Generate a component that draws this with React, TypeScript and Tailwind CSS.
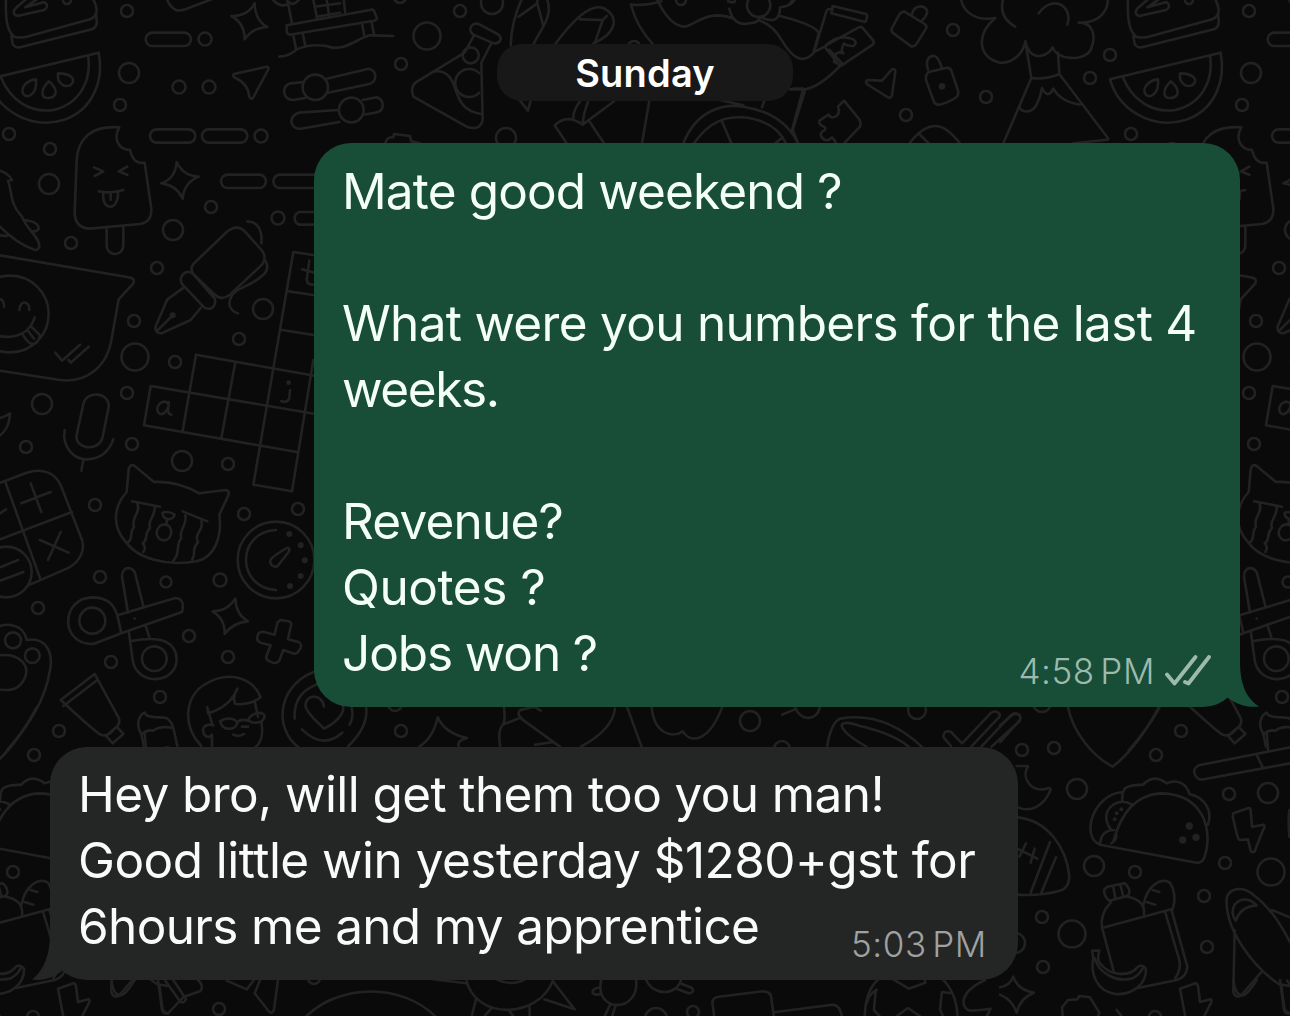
import React from 'react';
import clsx from 'clsx';

interface Line {
  text: string;
  tracking?: string;
}

interface Message {
  id: string;
  lines: Line[];
  time: string;
  outgoing: boolean;
}

const messages: Message[] = [
  {
    id: 'm1',
    outgoing: true,
    time: '4:58 PM',
    lines: [
      { text: 'Mate good weekend ?', tracking: 'tracking-[-0.86px]' },
      { text: '' },
      { text: 'What were you numbers for the last 4', tracking: 'tracking-[-0.7px]' },
      { text: 'weeks.', tracking: 'tracking-[-1.4px]' },
      { text: '' },
      { text: 'Revenue?', tracking: 'tracking-[-0.8px]' },
      { text: 'Quotes ?', tracking: 'tracking-[-0.43px]' },
      { text: 'Jobs won ?', tracking: 'tracking-[-1.1px]' },
    ],
  },
  {
    id: 'm2',
    outgoing: false,
    time: '5:03 PM',
    lines: [
      { text: 'Hey bro, will get them too you man!', tracking: 'tracking-[-0.6px]' },
      { text: 'Good little win yesterday $1280+gst for', tracking: 'tracking-[-0.53px]' },
      { text: '6hours me and my apprentice', tracking: 'tracking-[-0.66px]' },
    ],
  },
];

// The wallpaper repeats horizontally every TILE px
const TILE = 1122;

const bubbles: [number, number, number][] = [
  [127, 11, 6], [205, 39, 6.5], [129, 73, 10], [179, 87, 6.5], [209, 87, 6.5], [120, 105, 6], [9, 134, 6],
  [50, 149, 6], [49, 184, 10], [261, 136, 6.5], [211, 207, 6], [173, 230, 10], [71, 243, 6], [278, 218, 6.5],
  [67, 0, 4], [157, 268, 6], [263, 309, 10], [134, 321, 6], [239, 339, 6], [135, 357, 13.5], [175, 362, 6],
  [42, 404, 10], [127, 393, 6], [26, 447, 6], [132, 444, 6], [182, 461, 10], [228, 464, 6], [95, 505, 6],
  [244, 514, 6], [298, 509, 6], [100, 577, 6], [166, 582, 5.5], [220, 580, 6.5], [38, 608, 6], [189, 636, 6],
  [228, 657, 6], [111, 662, 6], [160, 697, 6], [59, 731, 6], [34, 755, 6], [13, 872, 6], [33, 1017, 6],
  [219, 1009, 6], [460, 11, 6], [427, 36, 13.5], [492, 3, 11], [401, 64, 6], [506, 138, 10], [400, -3, 6],
  [634, 47, 6], [681, 0, 5], [953, 30, 6], [986, 97, 6], [906, 115, 6], [1110, 55, 6], [1090, 78, 6],
  [1022, 750, 6], [1054, 748, 6], [1077, 789, 10], [1229, 794, 6], [1268, 793, 10], [1094, 866, 10],
  [1225, 863, 6], [1271, 872, 13.5], [1204, 896, 6], [1042, 917, 6], [1072, 934, 13.5], [1207, 947, 6],
  [1043, 967, 6], [1015, 943, 10], [1042, 703, 9], [401, 731, 6], [750, 721, 10], [917, 710, 9], [782, 749, 8],
  [395, 704, 7], [314, 978, 6], [656, 1019, 11], [693, 1012, 6],
];

// Doodles grouped by area; each group is drawn on a grid three times finer than the page
const doodles: { transform: string; paths: string[]; dots?: [number, number, number][] }[] = [
  {
    transform: 'translate(0 0) scale(.33333)',
    paths: [
      // toast
      'M18 0C16 50 20 90 38 105C42 115 60 114 80 110L270 58Q290 50 290 30Q288 10 276 -8M34 108L38 132Q44 144 60 142L276 88Q292 80 290 62L288 40M78 -2L50 22Q36 34 44 44Q50 50 62 46L132 30Q146 22 138 10Q132 4 120 10L76 22L110 -2',
      // watermelon
      'M-36 238L296 158C312 240 280 330 190 360C90 390 -10 330 -36 238ZM2 230C30 300 90 340 160 330C240 312 276 240 264 166',
      'M108 238C80 240 60 264 70 282C84 300 112 280 108 238ZM146 244C120 270 122 296 146 294C172 292 176 268 146 244ZM174 220C170 246 190 264 210 256C232 240 214 220 174 220Z',
      'M457 98H553A20 20 0 0 1 553 138H457A20 20 0 0 1 457 98ZM470 388H566A20 20 0 0 1 566 428H470A20 20 0 0 1 470 388ZM626 388H722A20 20 0 0 1 722 428H626A20 20 0 0 1 626 388Z',
      'M683 524H778A20 20 0 0 1 778 564H683A20 20 0 0 1 683 524ZM960 524H840A20 20 0 0 0 840 564H960M960 636H898A20 20 0 0 0 898 674H960',
      // sparkles and paper plane
      'M764 10Q765 62 802 81Q756 84 734 118Q734 70 694 48Q744 48 764 10Z',
      'M530 486Q550 528 596 530Q552 548 548 596Q530 556 484 550Q526 536 530 486Z',
      'M702 222L800 200Q808 200 804 210L760 292Q752 302 748 290Q744 250 706 234Q696 228 702 222Z',
      'M500 -5Q508 20 528 30Q540 34 556 28L640 -4',
      // ice lolly
      'M358 382C280 376 234 410 230 480L224 640Q226 684 270 686L420 672Q456 666 454 626L434 488Q400 494 390 450C356 450 338 416 358 382ZM320 684V738A24 24 0 0 0 370 736V678',
      'M282 502L310 514L284 528M382 500L356 514L382 524M296 574Q330 582 370 570M310 580C304 632 356 636 354 576M332 580V600',
      // house
      'M820 0Q846 28 870 8Q880 18 896 0M862 0L876 70M940 0L952 58M980 0L988 50M860 76L1110 30Q1122 26 1124 38L1130 52Q1132 60 1122 62L870 104Q862 104 860 94ZM880 106L888 146M908 100L916 138M838 170Q870 168 890 148Q930 130 980 138C1030 160 1080 110 1110 106L1180 108M1086 68L1092 104M1114 64L1122 102',
      'M944 20L1020 10M1030 -10L1036 40M950 50L1020 38',
      // sliders
      'M910 246L872 250Q852 256 852 276Q856 300 880 300L916 294M980 236L1106 206Q1126 210 1126 230Q1124 248 1108 252L984 278M1015 330L896 338Q874 346 874 366Q880 388 902 386L1018 366M1088 300L1130 292Q1150 298 1148 320Q1144 336 1126 338L1090 344',
      'M984 262A38 38 0 1 1 908 262A38 38 0 1 1 984 262ZM1091 330A37 37 0 1 1 1017 330A37 37 0 1 1 1091 330Z',
      // chili
      'M0 512Q26 520 36 540L24 542C38 580 28 610 66 650C80 690 120 710 118 740Q114 754 100 748Q50 730 0 680M70 660Q116 664 116 686Q110 698 92 692M0 706L20 708',
    ],
  },
  {
    transform: 'translate(0 240) scale(.33333)',
    paths: [
      // speech bubble sticker
      'M-130 40Q-60 40 0 46L386 112Q406 114 400 130L356 178L336 290C324 380 260 430 180 420L0 392L-90 376',
      'M146 222A115 115 0 1 1 -84 222A115 115 0 1 1 146 222ZM58 210C60 178 90 182 88 210M-20 190C-4 168 12 176 12 200M-50 260C-20 300 80 310 104 232M92 258L118 284M70 286C90 320 110 322 120 288M84 272L102 296',
      'M166 338L186 362L240 314M206 360L212 368L266 320',
      // fountain pen
      'M580 72L680 -24Q712 -50 736 -24L788 34Q800 56 786 74L690 164Q664 184 642 162L582 104Q568 88 580 72ZM548 104Q560 90 578 100L644 176Q650 196 632 206Q620 208 610 200L546 132Q538 116 548 104ZM552 142L502 178L466 262Q466 280 484 280L572 240L602 204M472 272L516 228',
      'M742 -56C772 -56 788 -30 784 10M796 62Q810 86 790 104C740 150 700 140 690 180C684 200 696 216 714 220',
      // crossword
      'M880 36L1240 90M864 154L960 168M846 270L960 288M880 36L760 734L876 754L940 360M588 344L960 410M588 344L548 572M706 366L664 594M452 438L960 524M452 438L432 556L890 636',
      'M928 62L920 120Q922 136 944 134M906 88L944 98M504 490C486 474 466 500 474 516C486 534 508 510 506 486L504 514Q506 522 514 524M870 450L868 474Q862 490 844 484M864 426L866 430',
      // microphone
      'M250 492C260 450 330 456 326 502L308 590C298 638 222 628 230 584ZM194 570C186 620 220 660 264 658Q320 654 340 598M250 660L244 692',
      'M0 534Q20 528 30 520C28 554 14 580 -6 590',
    ],
    dots: [[518, 226, 9], [866, 428, 7]],
  },
  {
    transform: 'translate(0 460) scale(.33333)',
    paths: [
      // calculator
      'M-30 80L80 38C130 22 168 40 184 80L246 240C258 280 230 312 200 326L90 374M16 66L120 354M-10 242L216 156M64 130L152 96M92 70L124 156M120 240L206 278M182 216L144 300M0 160L18 148',
      'M95 336A76 76 0 1 1 -57 336A76 76 0 1 1 95 336ZM0 322L54 300M0 362L70 336',
      // crying cat
      'M380 96L386 28Q390 10 404 18L462 66C510 64 560 78 598 100L678 90Q688 92 686 104L658 164C666 220 650 290 590 304C500 320 410 296 376 244C336 200 340 140 380 96Z',
      'M396 124L480 140M412 130C424 160 392 170 402 200C386 220 402 230 384 248M464 140C468 170 440 180 450 204C430 226 446 240 428 250Q440 262 430 276M548 154L622 184M556 166C562 200 534 210 544 234C524 260 544 276 520 302M604 184C614 210 580 220 594 246C572 270 590 280 576 300M488 158Q506 152 524 164Q520 178 504 178Q486 172 488 158ZM500 182V194M514 216C512 250 470 248 470 218C474 184 514 186 514 216Z',
      // timer
      'M943 300A115 115 0 1 1 713 300A115 115 0 1 1 943 300ZM828 210C708 216 708 382 828 390M812 298Q820 288 860 264Q872 262 866 276L836 314C826 328 806 314 812 298Z',
      // scissors
      'M276 412C180 416 180 556 280 552L364 520L546 456Q556 416 526 414L352 466C340 430 320 412 276 412ZM316 482A39 39 0 1 1 238 482A39 39 0 1 1 316 482ZM384 458L366 350C366 314 404 320 406 344L430 438M436 494L448 532M386 512L398 600C410 680 530 674 530 596C528 550 490 524 392 544M500 596A37 37 0 1 1 426 596A37 37 0 1 1 500 596ZM352 466L364 520',
      'M706 416Q708 464 744 484Q698 488 674 522Q676 478 638 454Q682 454 706 416Z',
      'M842 480L866 484Q878 488 872 500L864 538L896 546Q906 552 902 564L894 576Q888 584 878 580L850 570L838 602Q830 612 818 608L804 602Q796 596 800 586L812 556L782 548Q768 542 772 530L776 520Q782 514 792 516L824 524L832 488Z',
      // paw card
      'M-30 520C0 480 70 486 80 540C140 530 160 580 150 630C136 720 90 790 20 872M63 541A24 24 0 1 1 15 541A24 24 0 1 1 63 541ZM119 587A22 22 0 1 1 75 587A22 22 0 1 1 119 587ZM0 586C50 580 90 610 76 650C60 690 30 694 -4 688',
      // tube
      'M182 720L284 642L354 770Q362 784 354 796L330 820Q316 830 302 824Q290 820 182 720ZM190 738L292 660M318 828L350 800L370 822L338 850Z',
      // brush
      'M432 860L424 822C404 790 420 764 434 758C438 772 460 770 500 774Q516 786 520 804L532 858M424 824Q440 808 460 812Q480 796 520 804',
      // person
      'M604 858C540 790 560 700 620 670C690 630 760 656 782 712Q750 736 706 732Q696 712 712 686Q690 740 624 760L622 742L636 790M764 724L774 770M784 786C792 830 780 860 750 870M660 784C680 770 710 776 712 790C706 810 670 816 660 784ZM712 786Q724 776 744 782C750 760 790 750 794 768C790 794 756 790 746 782M726 800H744M700 824Q716 832 732 822M640 796C620 790 606 800 610 816C612 830 628 836 636 824V860',
      // latte
      'M960 630C840 660 810 800 900 866M970 668C910 680 880 720 884 776',
    ],
    dots: [[868, 222, 9], [902, 256, 9], [914, 301, 9], [902, 348, 9], [870, 378, 9], [404, 476, 4]],
  },
  {
    transform: 'translate(320 0) scale(.33333)',
    paths: [
      // flask
      'M454 78Q464 66 480 74L532 102Q546 110 540 122Q532 134 516 128L460 104Q446 94 454 78ZM462 106L434 158L286 248Q270 262 280 290L440 380Q480 394 488 360L484 188L514 130M346 214C430 210 380 330 484 342',
      'M476 166A24 24 0 1 1 428 166A24 24 0 1 1 476 166ZM478 220A42 42 0 1 0 478 278',
      // feathers
      'M572 136C574 80 590 30 606 -4M682 0C700 50 660 90 640 134M596 50L652 10L670 78M652 10V-6M704 134C760 60 810 10 850 24C900 50 890 100 820 130M780 58L848 60L826 124M848 60L860 48M600 302L624 332L632 302',
      // wrapped bouquet
      'M780 304Q760 330 760 354M804 306Q790 340 788 374L882 304M788 374Q740 340 704 376L740 430M808 364L852 430M988 302L966 430',
      // car and flower
      'M934 18Q950 80 1000 134M932 14Q980 18 1024 4M1012 0Q1050 80 1096 80C1130 72 1140 48 1190 46Q1216 46 1234 54M1224 4Q1248 12 1244 0M1228 26Q1240 80 1290 70Q1320 66 1320 50Q1380 80 1380 22Q1416 18 1426 -4M1351 16A35 35 0 1 1 1281 16A35 35 0 1 1 1351 16ZM1314 60Q1360 74 1386 122C1420 180 1450 190 1480 160L1496 100Q1490 76 1380 48',
      'M1090 430C1130 330 1210 310 1270 320C1360 334 1410 380 1434 430M1122 430C1170 360 1220 350 1270 352C1340 360 1380 390 1398 430M1204 360L1234 430M1366 430L1388 412M1200 300L1270 316M1334 300L1326 322M1420 266H1450L1416 390',
      'M196 430Q200 410 220 412L222 402L270 408L274 424L300 430',
    ],
  },
  {
    transform: 'translate(790 0) scale(.33333)',
    paths: [
      // hand with phone
      'M72 156L108 38Q110 24 128 28M128 18L228 42Q234 46 230 56L226 66L124 40ZM104 140L150 198Q90 260 46 268H0M46 268L8 390L24 430M72 156L104 140M118 150L160 194M108 136L206 82Q214 78 220 86L250 122Q254 128 248 134L164 190M104 140C130 112 160 106 190 118Q204 130 190 138Q170 138 162 130Q150 150 160 160Q144 152 134 166L132 186L156 196M0 10L12 -4',
      // tags and locks
      'M342 34L404 72Q412 78 408 86L378 134Q370 142 362 138L308 98Q302 92 306 84L330 40ZM366 42C372 14 404 12 412 34Q410 48 394 64',
      'M416 216L468 204Q480 202 484 212L504 272Q508 286 496 294Q474 308 450 314Q438 316 432 306L408 240Q406 224 416 216ZM414 208C404 176 420 166 434 168Q444 170 456 204',
      'M232 240L276 242L306 208Q314 204 316 214L306 286Q302 296 294 292L230 252Q226 244 232 240Z',
      'M162 302L208 358Q214 368 210 380L162 430M162 302L144 320Q152 342 136 350Q122 356 116 344L88 362Q86 374 102 380Q112 386 98 394C84 406 100 424 116 420L126 412Q132 416 138 430M358 430Q400 376 440 378Q470 380 510 430M386 400L416 430',
      // volcano
      'M512 -6C520 40 560 64 616 54C560 100 560 170 630 188C670 190 700 160 706 124Q716 170 750 168Q776 164 788 142C800 180 880 186 902 150C920 110 910 66 866 68C920 70 954 40 954 -4M640 -4C630 30 640 60 676 80M746 40C790 -20 850 20 832 74M706 124L724 234Q766 240 808 222L804 158M724 234L640 430M808 222L952 412Q960 420 944 420L850 430M690 316C680 330 720 350 740 314Q752 290 756 264Q774 300 790 266C810 300 840 310 870 314',
    ],
    dots: [[456, 259, 10]],
  },
  {
    transform: 'translate(1000 630) scale(.33333)',
    paths: [
      'M204 232C220 310 280 380 338 410C390 370 440 300 476 232',
      'M0 286L38 254Q54 246 62 264Q60 272 0 336',
      // moon
      'M50 408H82Q86 410 80 416C66 450 100 492 146 474Q154 474 150 484C130 530 90 548 54 532',
      // marker
      'M596 406L870 352M612 448L870 400M596 406C570 418 586 454 612 448M772 378L788 412M800 306L804 360',
      // taco
      'M300 644L590 698Q608 700 614 680C640 600 610 490 480 490C400 496 360 560 340 634M300 644C240 620 280 490 370 486Q370 472 400 466L430 464Q460 430 500 460C530 446 560 460 568 492C610 500 640 540 624 584M396 524C360 500 310 530 320 574Q324 590 334 600M300 640C304 610 320 600 342 600M334 640Q352 630 348 610M368 490L366 512',
      // football
      'M52 562C140 570 200 650 208 740Q206 776 180 782Q120 798 52 794M150 636L92 788M168 682L124 788M52 656L112 686M78 640L58 680M104 656L92 698',
      'M700 550L746 534Q752 534 752 542L756 590L790 584Q798 588 790 598L764 664Q758 670 752 662L744 628L720 630Q714 628 712 618L698 560Z',
      // backpack
      'M314 892L514 838L562 1010Q560 1042 530 1050L414 1074M306 892L342 1028M496 848L538 990Q544 1020 526 1044M306 892Q300 850 332 818Q330 810 344 808M384 800C414 806 436 820 432 854M322 770L374 760Q390 774 388 790Q384 800 374 800L328 812Q312 800 312 780ZM340 772L346 804M362 768L370 800M430 826C440 770 480 740 510 758C530 790 524 820 518 838M458 780L478 786M440 816L466 824',
      'M276 962L298 962Q290 990 300 1000C330 1040 390 1040 412 1012Q426 1000 438 1016C440 1060 400 1096 346 1092C290 1084 270 1030 280 984ZM284 984C296 1030 350 1060 400 1044Q424 1030 430 1010',
      // rocket
      'M680 804C690 770 730 770 760 794C820 840 850 900 870 936M680 804C674 900 760 1010 836 1062L870 1068M708 872Q690 850 704 824C724 800 750 806 770 826Q720 830 708 872ZM704 900L700 1086Q704 1104 722 1098L784 1026M816 840L870 862M844 1066L854 1140L870 1152',
      'M40 1040Q52 1080 102 1088Q60 1104 50 1148Q36 1108 0 1094M0 1072Q30 1066 40 1040',
      'M188 1160L186 1132L204 1110L232 1108L238 1098L270 1102L298 1148L294 1160M350 1140L366 1160',
      'M540 1076L586 1060Q592 1060 594 1068L600 1116L632 1108Q638 1112 632 1120L612 1160M540 1076L556 1160',
      'M868 540Q864 570 868 620',
    ],
    dots: [[568, 588, 11], [548, 630, 11], [588, 622, 11], [350, 550, 6], [364, 538, 6], [344, 568, 6]],
  },
  {
    transform: 'translate(0 730) scale(.33333)',
    paths: [
      'M334 748Q340 800 364 796Q380 790 404 750M474 750L486 840Q490 856 506 848L552 800L600 784Q614 770 594 750M496 752L540 814Q552 822 558 808L520 750M680 752L740 778L762 750M780 750L764 790L808 846Q818 852 822 838L834 750M920 858Q960 820 1000 806',
    ],
  },
  {
    // strip between the two messages
    transform: 'translate(300 690) scale(.45914 .33333)',
    paths: [
      'M52 50C50 10 10 10 12 50C20 80 40 96 52 116C90 90 96 60 94 50M4 118Q50 180 92 128M108 104Q118 80 112 50M144 50Q150 110 104 170',
      'M260 170Q290 144 300 82Q316 130 364 144Q340 152 346 170M444 50Q448 90 442 104Q430 120 436 170M442 104L482 82M480 60Q470 72 484 88L566 170M480 60L510 50L524 62M512 164L552 156M686 56Q680 120 612 170M712 50L744 170',
      'M766 50C770 130 810 146 834 124C850 160 890 160 920 50M1050 74L1078 58M1078 50C1090 100 1130 90 1132 50M1148 170Q1156 100 1176 86C1240 70 1300 100 1354 170M1234 170C1170 120 1160 80 1220 108Q1290 130 1326 170',
      'M1442 160L1504 70C1514 58 1530 70 1522 82L1462 170M1442 160L1418 126C1404 118 1398 136 1404 146L1418 168M1484 170L1548 76Q1558 64 1568 76M1506 170L1568 92',
    ],
  },
  {
    // strip under the last message
    transform: 'translate(300 960) scale(.45914 .33333)',
    paths: [
      'M14 168C90 70 220 70 294 168M290 58L362 70M362 58C380 180 520 180 552 58M428 58Q460 80 490 58M552 66L598 148L532 118M384 114L374 168M416 146L402 168M456 152L464 168M500 142V168',
      'M656 60C640 160 740 160 732 60M654 82Q634 86 638 100Q648 108 656 100M754 60C770 110 820 106 830 60M828 70L854 84Q860 98 846 100L820 86M676 132L664 168M688 134L680 168M902 168L898 126Q900 112 912 110L1008 94Q1024 94 1026 110L1032 168M1036 156L1160 134Q1176 136 1180 168',
      'M1230 168Q1232 90 1260 58M1292 58L1326 86L1362 68L1360 58M1254 90L1250 150L1262 168M1256 90Q1240 100 1234 130M1400 58Q1430 100 1432 168M1420 100L1398 96L1394 148L1400 168M1300 168L1324 144L1350 168M1492 60C1430 100 1440 150 1462 152Q1480 150 1504 146L1496 168',
    ],
  },
];

const DoodleTile: React.FC<{ x: number }> = ({ x }) => (
  <g transform={`translate(${x} 0)`}>
    {bubbles.map(([cx, cy, r]) => (
      <circle key={`${cx}-${cy}`} cx={cx} cy={cy} r={r} />
    ))}
    {doodles.map(group => (
      <g key={group.transform} transform={group.transform}>
        {group.paths.map(d => <path key={d} d={d} vectorEffect="non-scaling-stroke" />)}
        {group.dots?.map(([cx, cy, r]) => <circle key={`${cx}-${cy}`} cx={cx} cy={cy} r={r} fill="#222222" stroke="none" />)}
      </g>
    ))}
  </g>
);

const Wallpaper: React.FC = () => (
  <svg className="absolute inset-0" width="1290" height="1016" viewBox="0 0 1290 1016" fill="none" stroke="#222222" strokeWidth="2.6" strokeLinecap="round" strokeLinejoin="round">
    {[-TILE, 0, TILE].map(x => <DoodleTile key={x} x={x} />)}
  </svg>
);

const Tail: React.FC<{ outgoing: boolean }> = ({ outgoing }) =>
  outgoing ? (
    <svg className="absolute -right-[19px] bottom-0" width="60" height="60" viewBox="0 0 60 60" fill="#184d38">
      <path d="M10 10H41V14C41 37 47 51 60 59.5C48 61 37 57 29 51Z" />
    </svg>
  ) : (
    <svg className="absolute -left-[19px] bottom-0" width="60" height="60" viewBox="0 0 60 60" fill="#242626">
      <path d="M50 10H19V14C19 35 13 50 1 59.5C13 61 23 58 31 51Z" />
    </svg>
  );

const Bubble: React.FC<{ message: Message }> = ({ message }) => {
  const { outgoing, lines, time } = message;
  return (
    <div
      className={clsx(
        'relative rounded-[37px] text-[49.5px] leading-[66px] whitespace-pre',
        outgoing
          ? 'ml-[314px] h-[564px] w-[926px] bg-[#184d38] pt-[15px] pl-[28px] text-[#f4fff8]'
          : 'mt-[40px] ml-[50px] h-[233px] w-[968px] bg-[#242626] pt-[14px] pl-[28px] text-[#fafafa]'
      )}
    >
      <Tail outgoing={outgoing} />
      <div className="relative">
        {lines.map((line, i) => <p key={i} className={clsx('h-[66px]', line.tracking)}>{line.text}</p>)}
      </div>
      <div
        className={clsx(
          'absolute bottom-[15px] flex items-center text-[35px] leading-[42px] font-[360] tracking-[0.6px] [word-spacing:-5px]',
          outgoing ? 'right-[29px] gap-[10px] text-[#9dbbad]' : 'right-[31px] text-[#a0a1a1]'
        )}
      >
        <span>{time}</span>
        {outgoing && (
          <svg width="46" height="32" viewBox="0 0 46 32" fill="none" stroke="currentColor" strokeWidth="3.8" strokeLinecap="round" strokeLinejoin="round">
            <path d="M2 19.5L9.5 28.5L30.5 2M20 27L23.5 28.5L44 2" />
          </svg>
        )}
      </div>
    </div>
  );
};

const App: React.FC = () => {
  return (
    <main className="relative h-[1016px] w-[1290px] overflow-hidden bg-[#0a0a0a] font-['Inter',sans-serif]">
      <Wallpaper />
      <div className="relative flex flex-col pt-[44px]">
        <div className="mb-[42px] flex h-[57px] w-[296px] items-center justify-center self-center rounded-[25px] bg-[#181818] pt-[2px] text-[38px] font-semibold tracking-[0.2px] text-white">
          Sunday
        </div>
        {messages.map(m => <Bubble key={m.id} message={m} />)}
      </div>
    </main>
  );
};

export default App;
